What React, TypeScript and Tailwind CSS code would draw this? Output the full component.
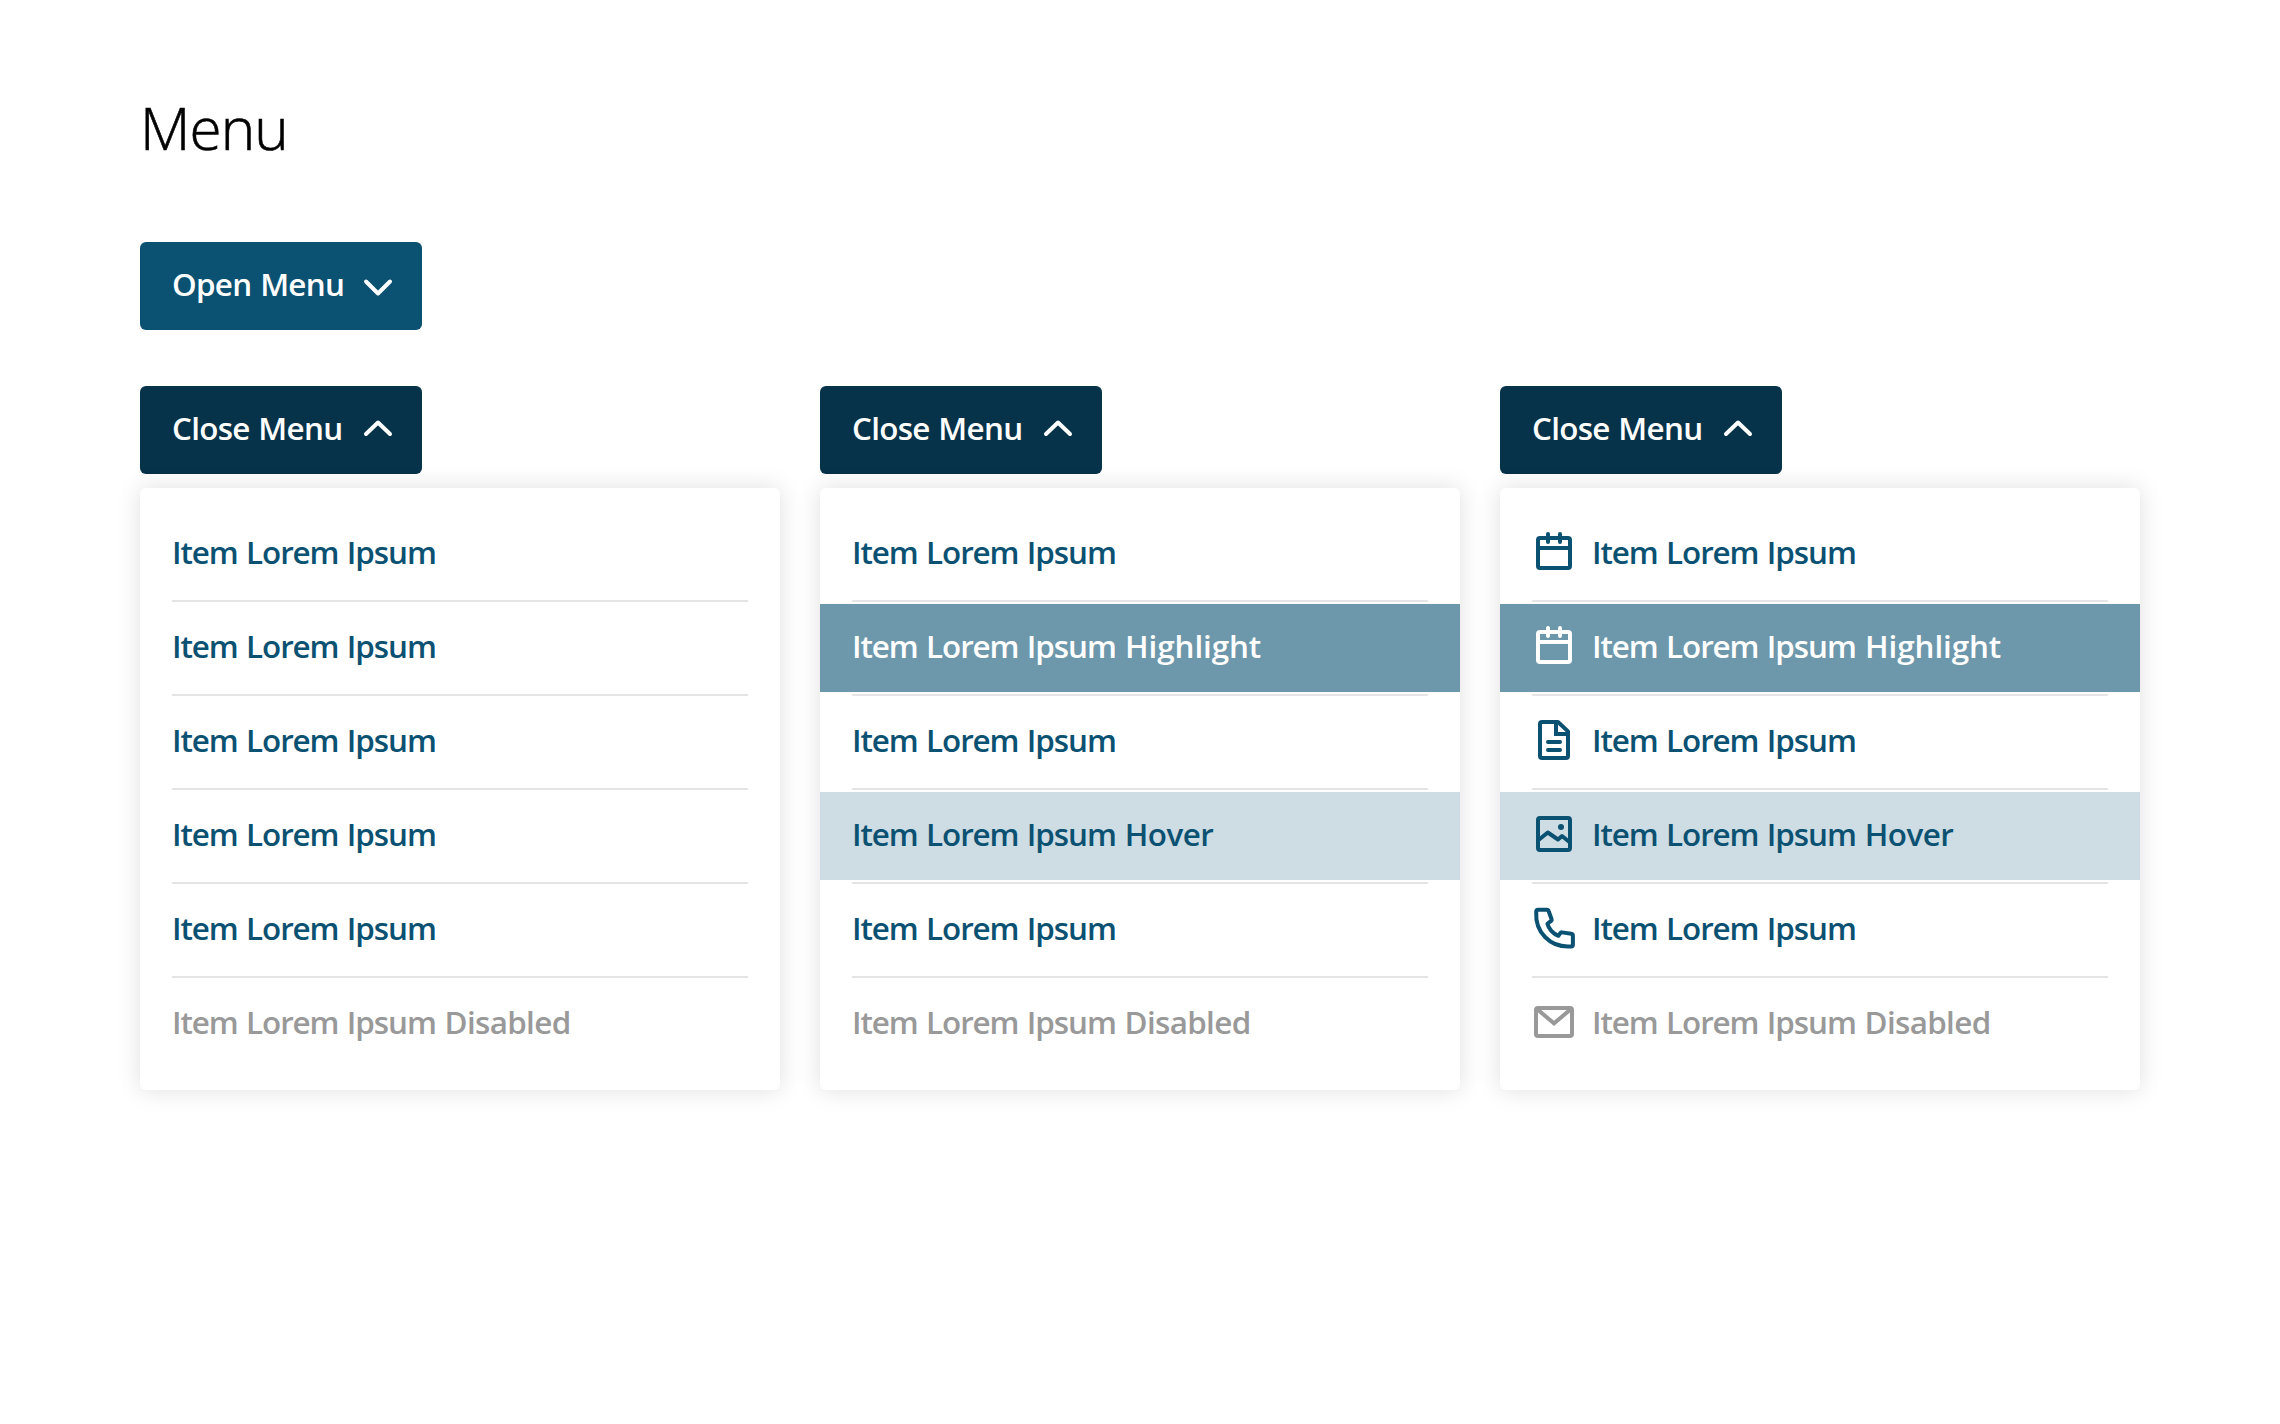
import type { ReactNode } from "react";

type Variant = "default" | "highlight" | "hover" | "disabled";
type Item = { variant: Variant; icon?: ReactNode };

function Icon({ children }: { children: ReactNode }) {
  return (
    <svg
      className="-ml-0.5 mr-3.5 size-12 shrink-0"
      viewBox="0 0 48 48"
      fill="none"
      stroke="currentColor"
      strokeWidth="4"
      strokeLinecap="round"
      strokeLinejoin="round"
    >
      {children}
    </svg>
  );
}

const calendar = (
  <Icon>
    <rect x="8" y="8" width="32" height="30" rx="2" />
    <path d="M8 18H40M18 4V12M30 4V12" />
  </Icon>
);

const file = (
  <Icon>
    <path d="M28 4H12a2 2 0 0 0-2 2V38a2 2 0 0 0 2 2H36a2 2 0 0 0 2-2V13.4Z" />
    <path d="M26 4.5V16H38" strokeLinecap="butt" strokeLinejoin="miter" />
    <path d="M18 24H30M18 32H30" />
  </Icon>
);

const image = (
  <Icon>
    <rect x="8" y="6" width="32" height="32" rx="2" />
    <path d="M8.5 28L17.8 20.5L28 27.5L32 24L40 30.5" strokeLinecap="butt" />
    <circle cx="31" cy="15" r="3" fill="currentColor" stroke="none" />
  </Icon>
);

const phone = (
  <Icon>
    <path d="M8.2 3.8H16.8a2 2 0 0 1 1.9 1.4L21.6 13.2a1.6 1.6 0 0 1-.5 1.7L17.4 17.8C18.6 22.6 23 28 28.4 29.8L30.2 27.2a1.8 1.8 0 0 1 1.8-.8L41.2 27.8a2 2 0 0 1 1.7 2V38.4a2 2 0 0 1-1.9 2C20 42 5 26 6.2 5.8a2 2 0 0 1 2-2Z" />
  </Icon>
);

const mail = (
  <Icon>
    <rect x="6" y="8" width="36" height="28" rx="2" />
    <path d="M7 9L24 23.4L41 9" strokeLinejoin="miter" />
  </Icon>
);

const plain: Item[] = [
  { variant: "default" },
  { variant: "default" },
  { variant: "default" },
  { variant: "default" },
  { variant: "default" },
  { variant: "disabled" },
];

const states: Item[] = [
  { variant: "default" },
  { variant: "highlight" },
  { variant: "default" },
  { variant: "hover" },
  { variant: "default" },
  { variant: "disabled" },
];

const withIcons: Item[] = [
  { variant: "default", icon: calendar },
  { variant: "highlight", icon: calendar },
  { variant: "default", icon: file },
  { variant: "hover", icon: image },
  { variant: "default", icon: phone },
  { variant: "disabled", icon: mail },
];

const rowStyle: Record<Variant, string> = {
  default: "text-[#0b5172]",
  highlight: "bg-[#6d97ab] text-white",
  hover: "bg-[#cedce3] text-[#0b5172]",
  disabled: "text-[#999999]",
};

const suffix: Record<Variant, ReactNode> = {
  default: null,
  highlight: <span className="tracking-[-0.1px]"> Highlight</span>,
  hover: <span className="tracking-[-0.5px]"> Hover</span>,
  disabled: <span className="tracking-[-0.65px]"> Disabled</span>,
};

function MenuButton({ open }: { open?: boolean }) {
  return (
    <button
      className={`flex h-22 w-[282px] items-center justify-between rounded-md pr-5 pl-8 text-[31.4px] font-semibold text-white ${
        open ? "bg-[#07334a]" : "bg-[#0b5172]"
      }`}
    >
      <span className="pb-1 tracking-[-0.7px] whitespace-nowrap [word-spacing:1.2px]">
        {open ? "Close Menu" : "Open Menu"}
      </span>
      <svg
        className="size-12"
        viewBox="0 0 48 48"
        fill="none"
        stroke="currentColor"
        strokeWidth="4"
        strokeLinecap="round"
        strokeLinejoin="round"
      >
        <path d={open ? "M12 28L24 16.5L36 28" : "M12 19.5L24 31.5L36 19.5"} />
      </svg>
    </button>
  );
}

function Menu({ items }: { items: Item[] }) {
  return (
    <div>
      <MenuButton open />
      <ul className="mt-3.5 rounded-md bg-white py-5.5 shadow-[0_0_24px_rgba(0,0,0,0.13)]">
        {items.map((item, i) => (
          <li key={i}>
            {i > 0 && <div className="mx-8 my-0.5 h-0.5 bg-[#e4e4e4]" />}
            <div className={`flex h-22 items-center px-8 text-[31.4px] font-semibold ${rowStyle[item.variant]}`}>
              {item.icon}
              <span className="pb-1 tracking-[-1.08px] whitespace-nowrap [word-spacing:1.3px]">
                Item Lorem Ipsum{suffix[item.variant]}
              </span>
            </div>
          </li>
        ))}
      </ul>
    </div>
  );
}

export default function App() {
  return (
    <main className="min-h-screen bg-white px-[140px] pt-24 font-['Open_Sans',sans-serif]">
      <h1 className="h-16 text-[58.4px] leading-16 font-light tracking-[-0.9px] text-black [-webkit-text-stroke:0.6px_black]">
        Menu
      </h1>
      <div className="mt-[82px]">
        <MenuButton />
      </div>
      <div className="mt-14 grid grid-cols-3 gap-10">
        <Menu items={plain} />
        <Menu items={states} />
        <Menu items={withIcons} />
      </div>
    </main>
  );
}
